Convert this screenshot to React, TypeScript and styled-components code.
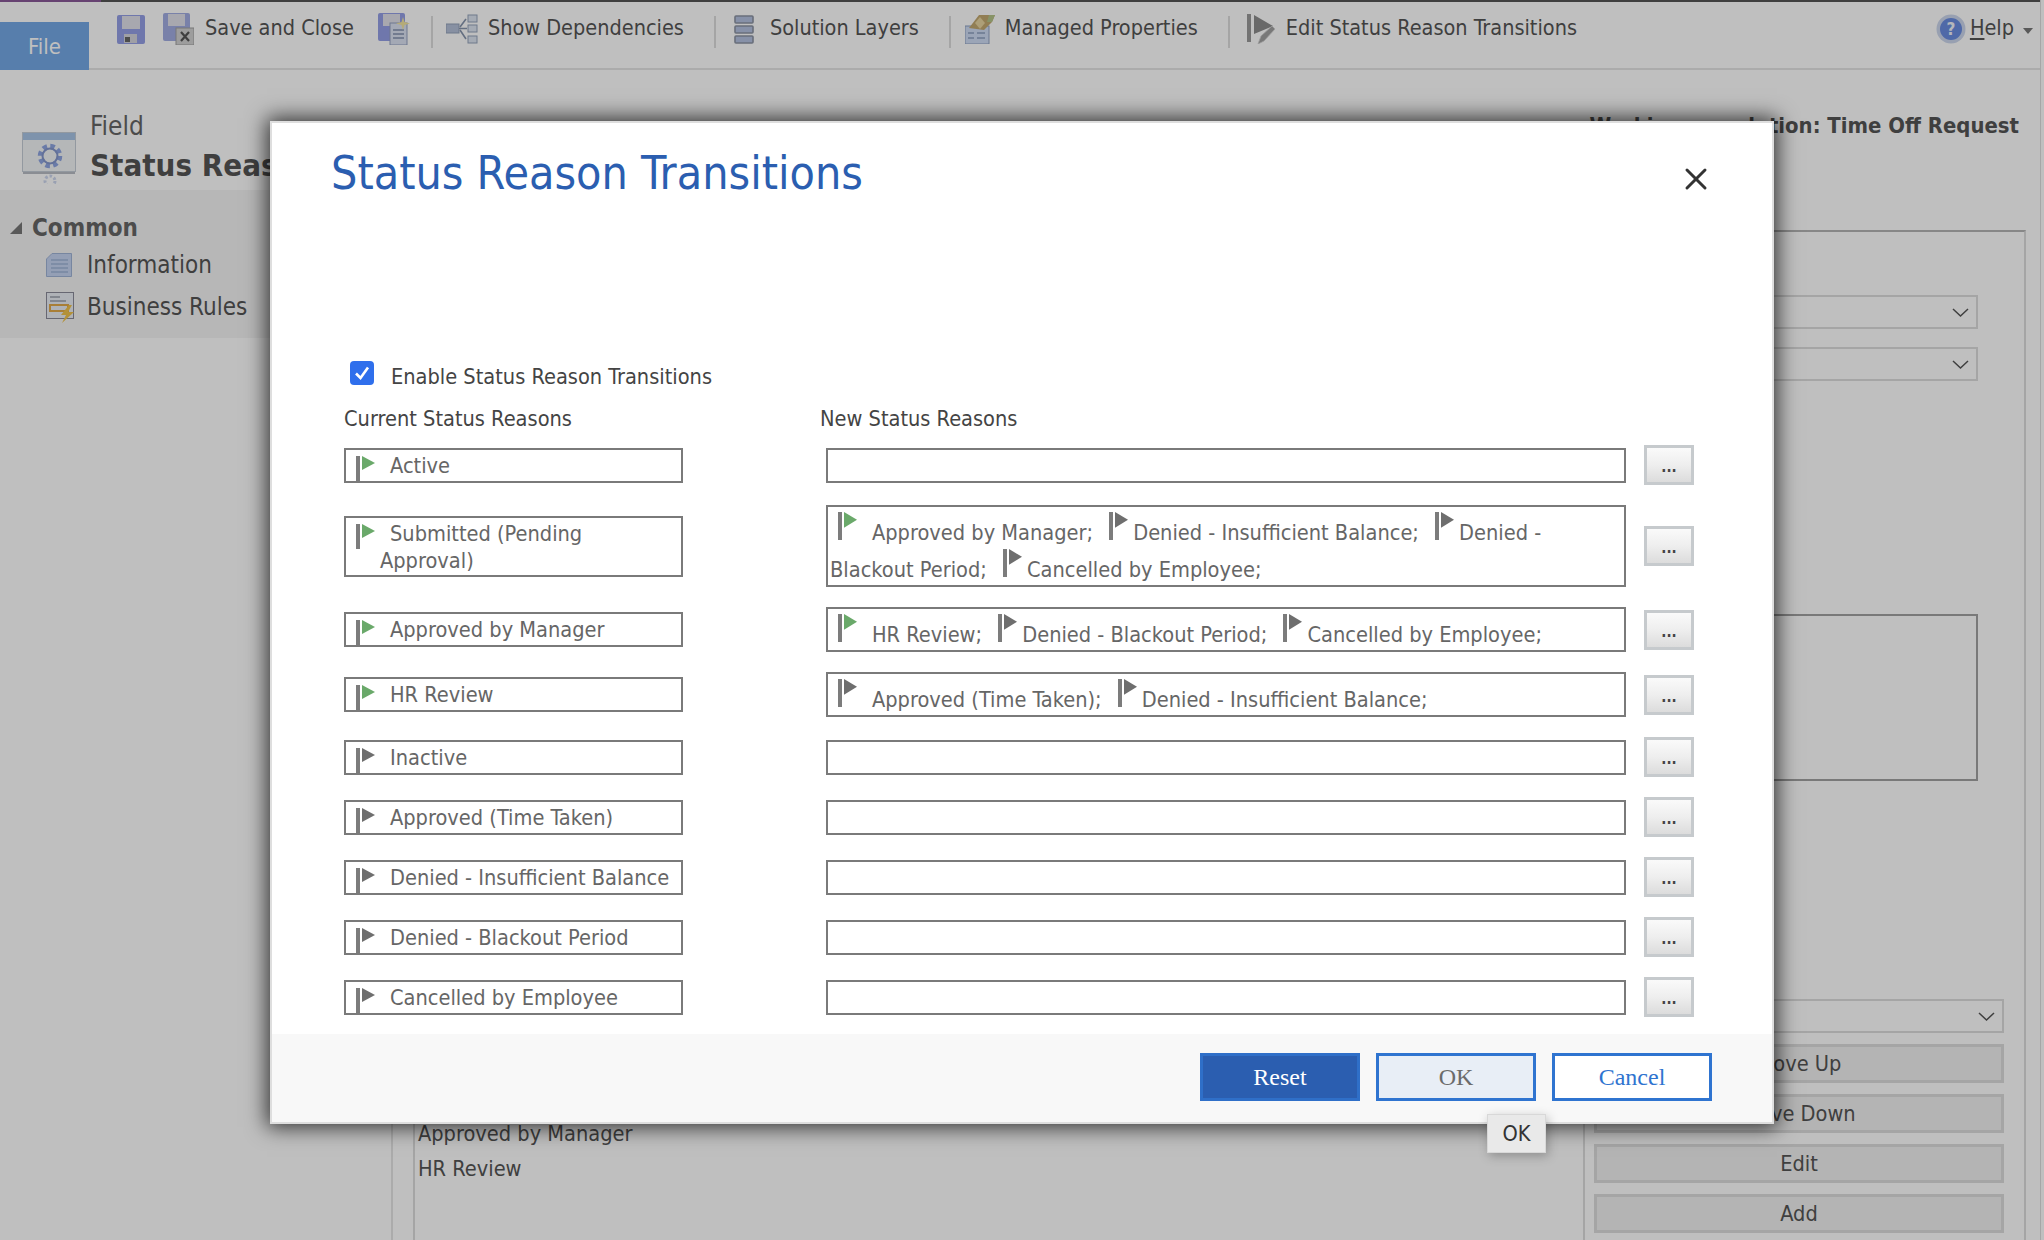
import React from 'react';
import styled, { createGlobalStyle } from 'styled-components';
import { X } from 'lucide-react';

const GlobalStyle = createGlobalStyle`
  html, body {
    margin: 0;
    padding: 0;
    background: #fff;
  }
  body {
    font-family: "DejaVu Sans Condensed", "DejaVu Sans", sans-serif;
    font-stretch: condensed;
    font-size: 21.6px;
    color: #555;
  }
`;

const Page = styled.div`
  position: relative;
  width: 2044px;
  height: 1240px;
  overflow: hidden;
  background: #fff;
`;

const Frame = styled.div`
  width: 2041px;
  height: 1240px;
  border-right: 1px solid #dedede;
  box-sizing: border-box;
  display: flex;
  flex-direction: column;
`;

const TopStrip = styled.div`
  height: 2px;
  flex: none;
  background: linear-gradient(to right, #8a5a98 101px, #555 101px);
`;

const Toolbar = styled.div`
  height: 68px;
  flex: none;
  box-sizing: border-box;
  display: flex;
  align-items: flex-start;
  border-bottom: 2px solid #e4e4e4;
  font-size: 21.5px;
`;

const FileTab = styled.div`
  width: 89px;
  height: 48px;
  margin-top: 20px;
  flex: none;
  display: flex;
  align-items: center;
  justify-content: center;
  background: #74a8e6;
  color: #fff;
  font-size: 22px;
`;

const ToolRow = styled.div`
  flex: 1;
  display: flex;
  align-items: center;
  height: 30px;
  margin-top: 12px;
  padding-left: 28px;
  padding-right: 7px;
`;

const ToolItem = styled.div<{ $before?: number; $gap?: number }>`
  display: flex;
  align-items: center;
  gap: ${(p) => p.$gap ?? 11}px;
  margin-left: ${(p) => p.$before ?? 0}px;
  white-space: nowrap;
`;

const ToolLabel = styled.span`
  line-height: 28px;
  margin-top: -2px;
`;

const ToolSep = styled.div<{ $before: number }>`
  width: 2px;
  height: 32px;
  margin-top: 6px;
  margin-left: ${(p) => p.$before}px;
  background: #dcdcdc;
  flex: none;
`;

const HelpItem = styled.div`
  margin-left: auto;
  display: flex;
  align-items: center;
  gap: 4px;
`;

const HelpKey = styled.span`
  text-decoration: underline;
  text-underline-offset: 3px;
`;

const HelpCaret = styled.div`
  width: 0;
  height: 0;
  margin-left: 5px;
  margin-top: 4px;
  border-left: 5px solid transparent;
  border-right: 5px solid transparent;
  border-top: 6px solid #777;
`;

const PageHeader = styled.div`
  height: 120px;
  flex: none;
  box-sizing: border-box;
  display: flex;
  align-items: flex-start;
  padding: 41px 21px 0 22px;
`;

const HeaderIconSlot = styled.div`
  margin-top: 21px;
  display: flex;
`;

const HeaderTitles = styled.div`
  margin-left: 14px;
  flex: 1;
`;

const HeaderEntity = styled.div`
  font-size: 26px;
  line-height: 30px;
  color: #666;
`;

const HeaderName = styled.div`
  margin-top: 4px;
  font-size: 31px;
  line-height: 40px;
  font-weight: 700;
`;

const SolutionName = styled.div`
  font-weight: 700;
  font-size: 21.9px;
  line-height: 30px;
`;

const Main = styled.div`
  flex: 1;
  display: flex;
  min-height: 0;
`;

const Sidebar = styled.div`
  width: 391px;
  flex: none;
  border-right: 2px solid #e4e4e4;
`;

const NavArea = styled.div`
  height: 148px;
  box-sizing: border-box;
  padding: 24px 0 0 10px;
  background: #f5f5f5;
  font-size: 24px;
`;

const NavGroup = styled.div`
  display: flex;
  align-items: center;
  gap: 10px;
  height: 28px;
  font-weight: 700;
  color: #666;
`;

const NavCaret = styled.div`
  width: 0;
  height: 0;
  border-style: solid;
  border-width: 0 0 12px 12px;
  border-color: transparent transparent #777 transparent;
`;

const NavItem = styled.div<{ $before: number }>`
  display: flex;
  align-items: center;
  height: 34px;
  margin-top: ${(p) => p.$before}px;
  padding-left: 36px;
`;

const NavIconSlot = styled.div`
  width: 41px;
  flex: none;
  display: flex;
`;

const FormFrame = styled.div`
  flex: 1;
  display: flex;
  flex-direction: column;
  box-sizing: border-box;
  margin: 40px 14px 0 20px;
  border-top: 2px solid #b4b4b4;
  border-right: 2px solid #dcdcdc;
  border-left: 2px solid #dcdcdc;
`;

const UpperFields = styled.div`
  margin: 63px 46px 0 auto;
  width: 978px;
  display: flex;
  flex-direction: column;
  gap: 18px;
`;

const SelectBox = styled.div`
  height: 34px;
  box-sizing: border-box;
  display: flex;
  align-items: center;
  justify-content: flex-end;
  padding-right: 7px;
  border: 2px solid #dcdcdc;
  background: #fff;
`;

const NotesBox = styled.div`
  height: 167px;
  margin: 215px 0 0;
  box-sizing: border-box;
  border: 2px solid #a2a2a2;
  background: #fff;
`;

const LowerFields = styled.div`
  flex: 1;
  margin-top: 218px;
  display: flex;
  min-height: 0;
`;

const ValueList = styled.div`
  flex: 1;
  padding: 47px 0 0 3px;
  line-height: 35px;
`;

const ActionColumn = styled.div`
  width: 410px;
  flex: none;
  margin-right: 20px;
  padding-left: 9px;
  border-left: 2px solid #dcdcdc;
  display: flex;
  flex-direction: column;
  gap: 11px;
`;

const ActionButton = styled.div`
  height: 39px;
  flex: none;
  box-sizing: border-box;
  display: flex;
  align-items: center;
  justify-content: center;
  background: #f0f0f0;
  border: 3px solid #dcdcdc;
`;

const Scrim = styled.div`
  position: absolute;
  inset: 0;
  background: rgba(0, 0, 0, 0.25);
`;

const Modal = styled.div`
  position: absolute;
  left: 270px;
  top: 121px;
  width: 1504px;
  height: 1003px;
  box-sizing: border-box;
  display: flex;
  flex-direction: column;
  background: #fff;
  border: 2px solid #dedede;
  box-shadow: 0 0 20px 3px rgba(0, 0, 0, 0.75);
`;

const ModalHeader = styled.div`
  flex: none;
  display: flex;
  align-items: flex-start;
  justify-content: space-between;
  padding: 26px 58px 0 59px;
`;

const ModalTitle = styled.h1`
  margin: 0;
  font-size: 46.2px;
  line-height: 48px;
  font-weight: 400;
  color: #2b5eb0;
`;

const CloseButton = styled.div`
  margin-top: 12px;
  display: flex;
  color: #333;
`;

const ModalBody = styled.div`
  flex: 1;
  min-height: 0;
  padding: 164px 0 0 72px;
`;

const EnableRow = styled.label`
  display: flex;
  align-items: flex-start;
  gap: 17px;
  height: 32px;
  padding-left: 6px;
`;

const CheckMark = styled.span`
  width: 24px;
  height: 24px;
  flex: none;
  display: flex;
  align-items: center;
  justify-content: center;
  border-radius: 4px;
  background: #2f6fec;
`;

const EnableText = styled.span`
  margin-top: 2px;
  line-height: 28px;
  color: #444;
`;

const ColumnHeads = styled.div`
  display: flex;
  margin-top: 12px;
  line-height: 28px;
  color: #444;
`;

const CurrentHead = styled.div`
  width: 476px;
  flex: none;
`;

const TransitionTable = styled.div`
  margin-top: 12px;
  display: flex;
  flex-direction: column;
  gap: 20px;
`;

const TransitionRow = styled.div`
  display: flex;
  align-items: center;
  min-height: 40px;
`;

const CurrentBox = styled.div`
  width: 339px;
  min-height: 35px;
  flex: none;
  box-sizing: border-box;
  padding: 2px 8px 0 34px;
  border: 2px solid #7a7a7a;
  line-height: 27.5px;
  color: #666;
`;

const CurrentFlag = styled.svg`
  width: 20px;
  height: 25px;
  margin: 4px 14px -4px -24px;
  vertical-align: top;
`;

const NewBox = styled.div`
  width: 800px;
  min-height: 35px;
  flex: none;
  margin-left: 143px;
  box-sizing: border-box;
  padding: 3px 6px 1px 2px;
  border: 2px solid #7a7a7a;
  line-height: 28px;
  color: #666;
`;

const TokenFlag = styled.svg<{ $first: boolean }>`
  width: 20px;
  height: 28px;
  margin: 2px ${(p) => (p.$first ? 14 : 4)}px 0 ${(p) => (p.$first ? 8 : 10)}px;
  vertical-align: baseline;
`;

const PickButton = styled.div`
  width: 50px;
  height: 40px;
  flex: none;
  margin-left: 18px;
  box-sizing: border-box;
  display: flex;
  align-items: flex-end;
  justify-content: center;
  padding-bottom: 7px;
  border: 3px solid #c6cacd;
  background: linear-gradient(to bottom, #fafafa 0%, #eee 50%, #dcdcdc 100%);
  font-size: 15px;
  font-weight: 700;
  line-height: 15px;
  color: #444;
`;

const ModalFooter = styled.div`
  height: 88px;
  flex: none;
  box-sizing: border-box;
  display: flex;
  justify-content: flex-end;
  gap: 16px;
  padding: 19px 60px 0 0;
  background: #f8f8f8;
`;

const DialogButton = styled.div<{ $kind: 'primary' | 'disabled' | 'plain' }>`
  width: 160px;
  height: 48px;
  box-sizing: border-box;
  display: flex;
  align-items: center;
  justify-content: center;
  border: 3px solid ${(p) => (p.$kind === 'primary' ? '#2f6fc8' : '#2f74d0')};
  font-family: "Liberation Serif", serif;
  font-stretch: normal;
  font-size: 24px;
  background: ${(p) => (p.$kind === 'primary' ? '#2b5eb0' : p.$kind === 'disabled' ? '#e8eef6' : '#fff')};
  color: ${(p) => (p.$kind === 'primary' ? '#fff' : p.$kind === 'disabled' ? '#6b6b6b' : '#2f74d0')};
`;

const Tip = styled.div`
  position: absolute;
  left: 1487px;
  top: 1114px;
  width: 59px;
  height: 39px;
  box-sizing: border-box;
  display: flex;
  align-items: center;
  justify-content: center;
  background: #e9e9e9;
  border: 1px solid #d8d8d8;
  box-shadow: 2px 3px 10px rgba(0, 0, 0, 0.25);
  color: #333;
`;

const Chevron = () => (
  <svg width="17" height="11" viewBox="0 0 17 11" fill="none">
    <path d="M1 2 L8.5 9 L16 2" stroke="#555" strokeWidth="1.5" />
  </svg>
);

const FlagShape = ({ green }: { green: boolean }) => (
  <>
    <rect x="0" y="0" width="4" height="25" fill="#7c7c7c" />
    <path d="M6 0 L19 7 L6 14 Z" fill={green ? '#6aa96a' : '#6e6e6e'} />
  </>
);

const SaveIcon = () => (
  <svg width="28" height="29" viewBox="0 0 28 29">
    <rect width="28" height="29" rx="2" fill="#949fe6" />
    <rect x="5" y="1" width="18" height="13" fill="#e0e0ea" />
    <rect x="7" y="19" width="13" height="9" fill="#d4d4dc" />
    <rect x="8" y="22" width="5" height="5" fill="#666" />
  </svg>
);

const SaveCloseIcon = () => (
  <svg width="31" height="32" viewBox="0 0 31 32">
    <rect width="27" height="28" rx="2" fill="#a2ace2" />
    <rect x="5" y="1" width="17" height="12" fill="#e0e0ea" />
    <rect x="13" y="15" width="18" height="17" fill="#d2d2d2" stroke="#a0a0a0" />
    <path d="M18 19 L26 28 M26 19 L18 28" stroke="#555" strokeWidth="2.2" />
  </svg>
);

const SaveNewIcon = () => (
  <svg width="32" height="32" viewBox="0 0 32 32">
    <rect width="27" height="28" rx="2" fill="#949fe6" />
    <rect x="5" y="1" width="17" height="12" fill="#e0e0ea" />
    <rect x="12" y="10" width="17" height="22" fill="#dbe2f2" stroke="#93a0c0" />
    <path d="M15 17 H26 M15 21 H26 M15 25 H26" stroke="#8290ae" strokeWidth="1.6" />
    <path d="M25 4 L26.5 9 L32 10.5 L26.5 12 L25 17 L23.5 12 L18 10.5 L23.5 9 Z" fill="#f2e4a0" />
  </svg>
);

const DependencyIcon = () => (
  <svg width="32" height="30" viewBox="0 0 32 30" fill="none">
    <rect x="0" y="10" width="13" height="9" fill="#b4c0d8" stroke="#93a2ba" />
    <rect x="22" y="1" width="9" height="7" fill="#dde4f0" stroke="#93a2ba" />
    <rect x="22" y="11" width="9" height="7" fill="#dde4f0" stroke="#93a2ba" />
    <rect x="22" y="22" width="9" height="7" fill="#dde4f0" stroke="#93a2ba" />
    <path d="M13 14.5 H21 M14 13 L20 5 M14 16 L20 25" stroke="#8694ac" strokeWidth="1.6" />
  </svg>
);

const LayersIcon = () => (
  <svg width="20" height="29" viewBox="0 0 20 29">
    <rect x="1" y="1" width="18" height="7" rx="1" fill="#b5c2e0" stroke="#8c94a4" strokeWidth="1.6" />
    <rect x="1" y="11" width="18" height="7" rx="1" fill="#b5c2e0" stroke="#8c94a4" strokeWidth="1.6" />
    <rect x="1" y="21" width="18" height="7" rx="1" fill="#b5c2e0" stroke="#8c94a4" strokeWidth="1.6" />
  </svg>
);

const ManagedIcon = () => (
  <svg width="30" height="30" viewBox="0 0 30 30">
    <rect x="0" y="12" width="24" height="18" fill="#cfdcf4" stroke="#8ea0c0" />
    <path d="M3 19 H9 M3 24 H9 M12 19 H20 M12 24 H20" stroke="#8ea0c0" strokeWidth="1.6" />
    <path d="M4 14 L14 1 H30 L27 8 L19 16 Z" fill="#c2a870" />
    <path d="M10 9 L15 3 L20 9 L15 15 Z" fill="#e7d4a0" />
    <path d="M24 1 H30 L27 8 H22 Z" fill="#b5c48a" />
  </svg>
);

const EditFlagIcon = () => (
  <svg width="28" height="30" viewBox="0 0 28 30">
    <rect x="0" y="0" width="4" height="28" fill="#9a9a9a" />
    <path d="M7 1 L26 12 L7 20 Z" fill="#8c8c8c" />
    <path d="M11 30 L14 22 L25 12 L28 15 L17 27 Z" fill="#a0a0a0" stroke="#d0d0d0" strokeWidth="0.8" />
  </svg>
);

const HelpIcon = () => (
  <svg width="30" height="30" viewBox="0 0 30 30">
    <circle cx="15" cy="15" r="14.5" fill="#cbd6ec" />
    <circle cx="15" cy="15" r="11" fill="#6a8ce0" />
    <text x="15" y="21" textAnchor="middle" fontSize="17" fontWeight="700" fill="#f2f4fa">?</text>
  </svg>
);

const EntityIcon = () => (
  <svg width="54" height="52" viewBox="0 0 54 52" fill="none">
    <rect x="0.5" y="0.5" width="53" height="39" fill="#f2f4f6" stroke="#c4ccd6" />
    <rect x="1" y="1" width="52" height="7" fill="#a9c4e6" />
    <circle cx="28" cy="24" r="9.5" stroke="#8ea5e0" strokeWidth="5.5" strokeDasharray="4.3 3.16" />
    <circle cx="28" cy="24" r="7.5" stroke="#8497cc" strokeWidth="2" />
    <rect x="1" y="40" width="52" height="2" fill="#b8bcc4" />
    <circle cx="28" cy="49" r="5" stroke="#ccd6ee" strokeWidth="3" strokeDasharray="2.5 2" />
  </svg>
);

const InfoIcon = () => (
  <svg width="26" height="24" viewBox="0 0 26 24">
    <path d="M6 0.5 H25.5 V23.5 H0.5 V6 Z" fill="#c6d5f2" stroke="#9fb3d6" />
    <path d="M5 7 H22 M5 11 H22 M5 15 H22 M5 19 H22" stroke="#a0b4d8" strokeWidth="1.6" />
  </svg>
);

const RulesIcon = () => (
  <svg width="30" height="31" viewBox="0 0 30 31">
    <rect x="0.5" y="0.5" width="27" height="26" fill="#eaeef4" stroke="#8a8a98" />
    <path d="M4 5 H14 M4 9 H20" stroke="#9aa0ac" strokeWidth="1.6" />
    <path d="M4 13 H22 V19 H4 Z" fill="none" stroke="#e0a84a" strokeWidth="2" />
    <path d="M23 13 L15 23 H20 L16 31 L28 20 H22 L26 13 Z" fill="#efc24c" />
  </svg>
);

const CheckGlyph = () => (
  <svg width="18" height="18" viewBox="0 0 18 18" fill="none">
    <path d="M3 9.5 L7.5 14 L15 3.5" stroke="#fff" strokeWidth="2.6" />
  </svg>
);

type Token = { label: string; green: boolean };

type Transition = {
  name: string;
  green: boolean;
  next: Token[];
};

const denied = (label: string): Token => ({ label, green: false });

const transitions: Transition[] = [
  { name: 'Active', green: true, next: [] },
  {
    name: 'Submitted (Pending Approval)',
    green: true,
    next: [
      { label: 'Approved by Manager;', green: true },
      denied('Denied - Insufficient Balance;'),
      denied('Denied - Blackout Period;'),
      denied('Cancelled by Employee;'),
    ],
  },
  {
    name: 'Approved by Manager',
    green: true,
    next: [
      { label: 'HR Review;', green: true },
      denied('Denied - Blackout Period;'),
      denied('Cancelled by Employee;'),
    ],
  },
  {
    name: 'HR Review',
    green: true,
    next: [denied('Approved (Time Taken);'), denied('Denied - Insufficient Balance;')],
  },
  { name: 'Inactive', green: false, next: [] },
  { name: 'Approved (Time Taken)', green: false, next: [] },
  { name: 'Denied - Insufficient Balance', green: false, next: [] },
  { name: 'Denied - Blackout Period', green: false, next: [] },
  { name: 'Cancelled by Employee', green: false, next: [] },
];

const App = () => (
  <Page>
    <GlobalStyle />
    <Frame>
      <TopStrip />
      <Toolbar>
        <FileTab>File</FileTab>
        <ToolRow>
          <ToolItem><SaveIcon /></ToolItem>
          <ToolItem $before={18}><SaveCloseIcon /><ToolLabel>Save and Close</ToolLabel></ToolItem>
          <ToolItem $before={24}><SaveNewIcon /></ToolItem>
          <ToolSep $before={21} />
          <ToolItem $before={13} $gap={10}><DependencyIcon /><ToolLabel>Show Dependencies</ToolLabel></ToolItem>
          <ToolSep $before={30} />
          <ToolItem $before={18} $gap={16}><LayersIcon /><ToolLabel>Solution Layers</ToolLabel></ToolItem>
          <ToolSep $before={30} />
          <ToolItem $before={14} $gap={10}><ManagedIcon /><ToolLabel>Managed Properties</ToolLabel></ToolItem>
          <ToolSep $before={30} />
          <ToolItem $before={17}><EditFlagIcon /><ToolLabel>Edit Status Reason Transitions</ToolLabel></ToolItem>
          <HelpItem>
            <HelpIcon />
            <ToolLabel><HelpKey>H</HelpKey>elp</ToolLabel>
            <HelpCaret />
          </HelpItem>
        </ToolRow>
      </Toolbar>
      <PageHeader>
        <HeaderIconSlot><EntityIcon /></HeaderIconSlot>
        <HeaderTitles>
          <HeaderEntity>Field</HeaderEntity>
          <HeaderName>Status Reason</HeaderName>
        </HeaderTitles>
        <SolutionName>Working on solution: Time Off Request</SolutionName>
      </PageHeader>
      <Main>
        <Sidebar>
          <NavArea>
            <NavGroup><NavCaret />Common</NavGroup>
            <NavItem $before={6}><NavIconSlot><InfoIcon /></NavIconSlot>Information</NavItem>
            <NavItem $before={8}><NavIconSlot><RulesIcon /></NavIconSlot>Business Rules</NavItem>
          </NavArea>
        </Sidebar>
        <FormFrame>
          <UpperFields>
            <SelectBox><Chevron /></SelectBox>
            <SelectBox><Chevron /></SelectBox>
            <NotesBox />
          </UpperFields>
          <LowerFields>
            <ValueList>
              <div>Active</div>
              <div>Submitted (Pending Approval)</div>
              <div>Approved by Manager</div>
              <div>HR Review</div>
            </ValueList>
            <ActionColumn>
              <SelectBox><Chevron /></SelectBox>
              <ActionButton>Move Up</ActionButton>
              <ActionButton>Move Down</ActionButton>
              <ActionButton>Edit</ActionButton>
              <ActionButton>Add</ActionButton>
            </ActionColumn>
          </LowerFields>
        </FormFrame>
      </Main>
    </Frame>
    <Scrim />
    <Modal>
      <ModalHeader>
        <ModalTitle>Status Reason Transitions</ModalTitle>
        <CloseButton><X size={36} strokeWidth={2} /></CloseButton>
      </ModalHeader>
      <ModalBody>
        <EnableRow>
          <CheckMark><CheckGlyph /></CheckMark>
          <EnableText>Enable Status Reason Transitions</EnableText>
        </EnableRow>
        <ColumnHeads>
          <CurrentHead>Current Status Reasons</CurrentHead>
          <div>New Status Reasons</div>
        </ColumnHeads>
        <TransitionTable>
          {transitions.map((row) => (
            <TransitionRow key={row.name}>
              <CurrentBox>
                <CurrentFlag viewBox="0 0 20 25"><FlagShape green={row.green} /></CurrentFlag>
                {row.name}
              </CurrentBox>
              <NewBox>
                {row.next.map((token, i) => (
                  <React.Fragment key={token.label}>
                    <TokenFlag $first={i === 0} viewBox="0 0 20 25" preserveAspectRatio="none">
                      <FlagShape green={token.green} />
                    </TokenFlag>
                    {token.label}{' '}
                  </React.Fragment>
                ))}
              </NewBox>
              <PickButton>...</PickButton>
            </TransitionRow>
          ))}
        </TransitionTable>
      </ModalBody>
      <ModalFooter>
        <DialogButton $kind="primary">Reset</DialogButton>
        <DialogButton $kind="disabled">OK</DialogButton>
        <DialogButton $kind="plain">Cancel</DialogButton>
      </ModalFooter>
    </Modal>
    <Tip>OK</Tip>
  </Page>
);

export default App;
